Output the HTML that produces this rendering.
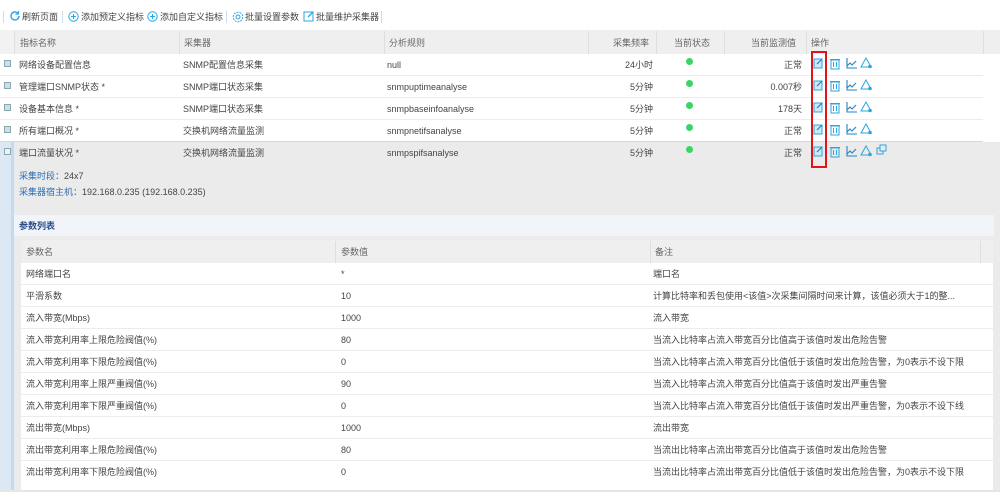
<!DOCTYPE html>
<html><head><meta charset="utf-8"><style>
*{box-sizing:border-box;margin:0;padding:0}
body{width:1000px;height:500px;overflow:hidden;background:#fff;font-family:"Liberation Sans","Noto Sans CJK SC",sans-serif;font-size:9px;line-height:12px;color:#444;position:relative}
.a{position:absolute;white-space:nowrap;line-height:12px}
.tb{top:0;left:0;width:1000px;height:30px;background:#fff}
.hdr{background:#efefef}
.line{position:absolute;height:1px;background:#ececec}
.vl{position:absolute;width:1px;background:#dedede}
.ic{position:absolute}
.blue{color:#2a6fb5}
</style></head><body>
<div class="a tb"></div>
<div class="a" style="left:3px;top:11px;width:1px;height:12px;background:#cde"></div>
<svg class="ic" style="left:9px;top:10px" width="12" height="12" viewBox="0 0 12 12"><path d="M10 6a4 4 0 1 1-1.2-2.9" fill="none" stroke="#2aa6e0" stroke-width="1.4"/><path d="M9.5 1v3h-3" fill="none" stroke="#2aa6e0" stroke-width="1.2"/></svg>
<div class="a" style="left:22px;top:11px">刷新页面</div>
<div class="a" style="left:62px;top:11px;width:1px;height:12px;background:#cde"></div>
<svg class="ic" style="left:68px;top:11px" width="11" height="11"><circle cx="5.5" cy="5.5" r="4.7" fill="none" stroke="#2aa6e0"/><path d="M5.5 3v5M3 5.5h5" stroke="#2aa6e0"/></svg>
<div class="a" style="left:81px;top:11px">添加预定义指标</div>
<svg class="ic" style="left:147px;top:11px" width="11" height="11"><circle cx="5.5" cy="5.5" r="4.7" fill="none" stroke="#2aa6e0"/><path d="M5.5 3v5M3 5.5h5" stroke="#2aa6e0"/></svg>
<div class="a" style="left:160px;top:11px">添加自定义指标</div>
<div class="a" style="left:226px;top:11px;width:1px;height:12px;background:#cde"></div>
<svg class="ic" style="left:232px;top:11px" width="12" height="12"><circle cx="6" cy="6" r="4.8" fill="none" stroke="#2aa6e0" stroke-dasharray="2 1"/><circle cx="6" cy="6" r="2" fill="none" stroke="#2aa6e0"/></svg>
<div class="a" style="left:245px;top:11px">批量设置参数</div>
<svg class="ic" style="left:303px;top:10px" width="12" height="12"><rect x="1" y="2" width="9" height="9" fill="none" stroke="#2aa6e0"/><path d="M5 7l5-5" stroke="#2aa6e0" stroke-width="1.3"/></svg>
<div class="a" style="left:316px;top:11px">批量维护采集器</div>
<div class="a" style="left:381px;top:11px;width:1px;height:12px;background:#cde"></div>

<div class="a hdr" style="left:0;top:30px;width:1000px;height:24px"></div>
<div class="a" style="left:0;top:30px;width:14px;height:24px;background:#f2f2f2"></div>
<div class="vl" style="left:14px;top:31px;height:23px"></div>
<div class="vl" style="left:179px;top:31px;height:23px"></div>
<div class="vl" style="left:384px;top:31px;height:23px"></div>
<div class="vl" style="left:588px;top:31px;height:23px"></div>
<div class="vl" style="left:656px;top:31px;height:23px"></div>
<div class="vl" style="left:724px;top:31px;height:23px"></div>
<div class="vl" style="left:806px;top:31px;height:23px"></div>
<div class="vl" style="left:983px;top:31px;height:23px"></div>
<div class="a" style="left:20px;top:37px;color:#666">指标名称</div>
<div class="a" style="left:184px;top:37px;color:#666">采集器</div>
<div class="a" style="left:389px;top:37px;color:#666">分析规则</div>
<div class="a" style="left:613px;top:37px;color:#666">采集频率</div>
<div class="a" style="left:674px;top:37px;color:#666">当前状态</div>
<div class="a" style="left:751px;top:37px;color:#666">当前监测值</div>
<div class="a" style="left:811px;top:37px;color:#666">操作</div>

<div class="a" style="left:0;top:142px;width:1000px;height:348px;background:#ebebeb"></div>
<div class="a" style="left:0;top:142px;width:14px;height:348px;background:#dde8f5"></div>
<div class="a" style="left:11px;top:142px;width:3px;height:348px;background:#c5d9f0"></div>

<div class="line" style="left:0;top:75px;width:983px"></div>
<div class="line" style="left:0;top:97px;width:983px"></div>
<div class="line" style="left:0;top:119px;width:983px"></div>
<div class="line" style="left:0;top:141px;width:983px;background:#d8d8d8"></div>

<div class="a" style="left:4px;top:60px;width:7px;height:7px;border:1px solid #8aa;background:#cde"></div>
<div class="a" style="left:4px;top:82px;width:7px;height:7px;border:1px solid #8aa;background:#cde"></div>
<div class="a" style="left:4px;top:104px;width:7px;height:7px;border:1px solid #8aa;background:#cde"></div>
<div class="a" style="left:4px;top:126px;width:7px;height:7px;border:1px solid #8aa;background:#cde"></div>
<div class="a" style="left:4px;top:148px;width:7px;height:7px;border:1px solid #8aa;background:#eef"></div>

<div class="a" style="left:19px;top:59px">网络设备配置信息</div>
<div class="a" style="left:19px;top:81px">管理端口SNMP状态 *</div>
<div class="a" style="left:19px;top:103px">设备基本信息 *</div>
<div class="a" style="left:19px;top:125px">所有端口概况 *</div>
<div class="a" style="left:19px;top:147px">端口流量状况 *</div>

<div class="a" style="left:183px;top:59px">SNMP配置信息采集</div>
<div class="a" style="left:183px;top:81px">SNMP端口状态采集</div>
<div class="a" style="left:183px;top:103px">SNMP端口状态采集</div>
<div class="a" style="left:183px;top:125px">交换机网络流量监测</div>
<div class="a" style="left:183px;top:147px">交换机网络流量监测</div>

<div class="a" style="left:387px;top:59px">null</div>
<div class="a" style="left:387px;top:81px">snmpuptimeanalyse</div>
<div class="a" style="left:387px;top:103px">snmpbaseinfoanalyse</div>
<div class="a" style="left:387px;top:125px">snmpnetifsanalyse</div>
<div class="a" style="left:387px;top:147px">snmpspifsanalyse</div>

<div class="a" style="right:347px;top:59px">24小时</div>
<div class="a" style="right:347px;top:81px">5分钟</div>
<div class="a" style="right:347px;top:103px">5分钟</div>
<div class="a" style="right:347px;top:125px">5分钟</div>
<div class="a" style="right:347px;top:147px">5分钟</div>

<div class="a" style="left:686px;top:58px;width:7px;height:7px;border-radius:50%;background:#3fd26a"></div>
<div class="a" style="left:686px;top:80px;width:7px;height:7px;border-radius:50%;background:#3fd26a"></div>
<div class="a" style="left:686px;top:102px;width:7px;height:7px;border-radius:50%;background:#3fd26a"></div>
<div class="a" style="left:686px;top:124px;width:7px;height:7px;border-radius:50%;background:#3fd26a"></div>
<div class="a" style="left:686px;top:146px;width:7px;height:7px;border-radius:50%;background:#3fd26a"></div>

<div class="a" style="right:198px;top:59px">正常</div>
<div class="a" style="right:198px;top:81px">0.007秒</div>
<div class="a" style="right:198px;top:103px">178天</div>
<div class="a" style="right:198px;top:125px">正常</div>
<div class="a" style="right:198px;top:147px">正常</div>

<svg class="ic" style="left:810px;top:55px" width="80" height="110">
<defs><g id="ops">
<rect x="4" y="4" width="8" height="9" fill="#cfe9f7" stroke="#2aa6e0"/><path d="M7 9l5-5" stroke="#2a7fc0" stroke-width="1.2"/>
<rect x="21" y="5" width="8" height="9" fill="none" stroke="#2aa6e0"/><path d="M20 4.5h10M23.5 7v5M26.5 7v5" stroke="#2aa6e0"/>
<path d="M37 3v10h10M37 11l3-3 2 2 4-4" fill="none" stroke="#2a7fc0" stroke-width="1.1"/>
<path d="M56 3l-5 9h10z" fill="none" stroke="#2aa6e0"/><circle cx="60" cy="11.5" r="1.8" fill="#2aa6e0"/>
</g></defs>
<use href="#ops" y="0"/><use href="#ops" y="22"/><use href="#ops" y="44"/><use href="#ops" y="66"/><use href="#ops" y="88"/>
<rect x="67" y="93" width="6" height="6" fill="none" stroke="#2aa6e0"/><rect x="70" y="90" width="6" height="6" fill="#ebebeb" stroke="#2aa6e0"/>
</svg>
<div class="a" style="left:811px;top:51px;width:16px;height:117px;border:2px solid #e0141b"></div>

<div class="a blue" style="left:19px;top:170px">采集时段：<span style="color:#444">24x7</span></div>
<div class="a blue" style="left:19px;top:186px">采集器宿主机：<span style="color:#444">192.168.0.235 (192.168.0.235)</span></div>

<div class="a" style="left:14px;top:215px;width:980px;height:21px;background:#f1f4f8"></div>
<div class="a" style="left:19px;top:220px;color:#2a4d8a;font-weight:bold">参数列表</div>
<div class="a" style="left:21px;top:240px;width:972px;height:250px;background:#fff"></div>
<div class="a hdr" style="left:21px;top:240px;width:972px;height:23px"></div>
<div class="vl" style="left:335px;top:241px;height:22px"></div>
<div class="vl" style="left:650px;top:241px;height:22px"></div>
<div class="vl" style="left:980px;top:241px;height:22px"></div>
<div class="a" style="left:26px;top:246px;color:#666">参数名</div>
<div class="a" style="left:341px;top:246px;color:#666">参数值</div>
<div class="a" style="left:655px;top:246px;color:#666">备注</div>

<div class="line" style="left:21px;top:284px;width:972px"></div>
<div class="line" style="left:21px;top:306px;width:972px"></div>
<div class="line" style="left:21px;top:328px;width:972px"></div>
<div class="line" style="left:21px;top:350px;width:972px"></div>
<div class="line" style="left:21px;top:372px;width:972px"></div>
<div class="line" style="left:21px;top:394px;width:972px"></div>
<div class="line" style="left:21px;top:416px;width:972px"></div>
<div class="line" style="left:21px;top:438px;width:972px"></div>
<div class="line" style="left:21px;top:460px;width:972px"></div>

<div class="a" style="left:26px;top:268px">网络端口名</div><div class="a" style="left:341px;top:268px">*</div><div class="a" style="left:653px;top:268px">端口名</div>
<div class="a" style="left:26px;top:290px">平滑系数</div><div class="a" style="left:341px;top:290px">10</div><div class="a" style="left:653px;top:290px">计算比特率和丢包使用&lt;该值&gt;次采集间隔时间来计算，该值必须大于1的整...</div>
<div class="a" style="left:26px;top:312px">流入带宽(Mbps)</div><div class="a" style="left:341px;top:312px">1000</div><div class="a" style="left:653px;top:312px">流入带宽</div>
<div class="a" style="left:26px;top:334px">流入带宽利用率上限危险阀值(%)</div><div class="a" style="left:341px;top:334px">80</div><div class="a" style="left:653px;top:334px">当流入比特率占流入带宽百分比值高于该值时发出危险告警</div>
<div class="a" style="left:26px;top:356px">流入带宽利用率下限危险阀值(%)</div><div class="a" style="left:341px;top:356px">0</div><div class="a" style="left:653px;top:356px">当流入比特率占流入带宽百分比值低于该值时发出危险告警，为0表示不设下限</div>
<div class="a" style="left:26px;top:378px">流入带宽利用率上限严重阀值(%)</div><div class="a" style="left:341px;top:378px">90</div><div class="a" style="left:653px;top:378px">当流入比特率占流入带宽百分比值高于该值时发出严重告警</div>
<div class="a" style="left:26px;top:400px">流入带宽利用率下限严重阀值(%)</div><div class="a" style="left:341px;top:400px">0</div><div class="a" style="left:653px;top:400px">当流入比特率占流入带宽百分比值低于该值时发出严重告警，为0表示不设下线</div>
<div class="a" style="left:26px;top:422px">流出带宽(Mbps)</div><div class="a" style="left:341px;top:422px">1000</div><div class="a" style="left:653px;top:422px">流出带宽</div>
<div class="a" style="left:26px;top:444px">流出带宽利用率上限危险阀值(%)</div><div class="a" style="left:341px;top:444px">80</div><div class="a" style="left:653px;top:444px">当流出比特率占流出带宽百分比值高于该值时发出危险告警</div>
<div class="a" style="left:26px;top:466px">流出带宽利用率下限危险阀值(%)</div><div class="a" style="left:341px;top:466px">0</div><div class="a" style="left:653px;top:466px">当流出比特率占流出带宽百分比值低于该值时发出危险告警，为0表示不设下限</div>

<div class="a" style="left:0;top:490px;width:1000px;height:10px;background:#fff"></div>
<div class="a" style="left:0;top:490px;width:1000px;height:2px;background:#e6e6e6"></div>
</body></html>
